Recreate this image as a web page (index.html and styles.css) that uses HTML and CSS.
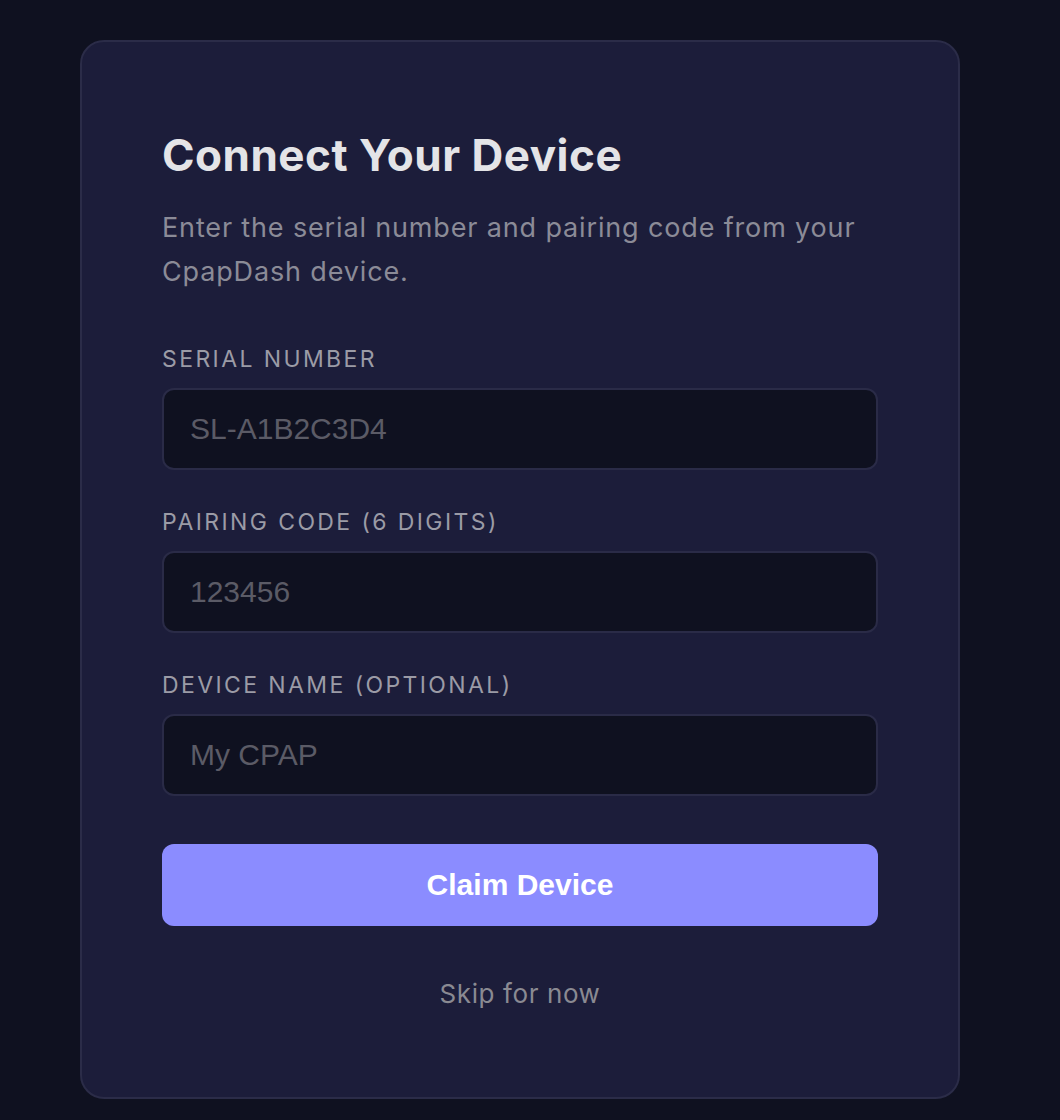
FILE: index.html
```html
<!DOCTYPE html>
<html lang="en">
<head>
<meta charset="utf-8">
<title>Connect Your Device</title>
<link rel="stylesheet" href="styles.css">
</head>
<body>
<main class="page">
  <section class="card">
    <h1 class="title">Connect Your Device</h1>
    <p class="subtitle">Enter the serial number and pairing code from your CpapDash device.</p>
    <form class="form">
      <label class="field">
        <span class="label">Serial Number</span>
        <input class="input" type="text" placeholder="SL-A1B2C3D4">
      </label>
      <label class="field">
        <span class="label">Pairing Code (6 digits)</span>
        <input class="input" type="text" placeholder="123456">
      </label>
      <label class="field">
        <span class="label">Device Name (optional)</span>
        <input class="input" type="text" placeholder="My CPAP">
      </label>
      <button class="primary" type="button">Claim Device</button>
      <button class="skip" type="button">Skip for now</button>
    </form>
  </section>
</main>
</body>
</html>
```

FILE: styles.css
```css
html, body {
  margin: 0;
  padding: 0;
  background: #0f1120;
}
body {
  font-family: Inter, "Noto Sans", sans-serif;
}
.page {
  padding: 40px 100px 20px 80px;
  min-height: 1040px;
}
.card {
  box-sizing: border-box;
  width: 880px;
  background: #1c1d3a;
  border: 2px solid #2b2c48;
  border-radius: 24px;
  padding: 80px 80px 82px;
}
.title {
  margin: 0;
  font-size: 44px;
  line-height: 66px;
  font-weight: 700;
  color: #e4e4e7;
  letter-spacing: 0.5px;
}
.subtitle {
  margin: 18px 0 0;
  font-size: 27px;
  line-height: 44px;
  letter-spacing: 0.85px;
  color: #8b8b97;
}
.form {
  display: flex;
  flex-direction: column;
  margin-top: 49px;
}
.field {
  display: flex;
  flex-direction: column;
  margin-bottom: 36px;
}
.label {
  font-size: 23px;
  line-height: 32px;
  text-transform: uppercase;
  letter-spacing: 2.4px;
  color: #9b9ba6;
  margin-bottom: 13px;
}
.input {
  box-sizing: border-box;
  height: 82px;
  width: 100%;
  background: #0f1120;
  border: 2px solid #2a2b47;
  border-radius: 12px;
  padding: 0 26px;
  font-family: "Liberation Sans", Arial, sans-serif;
  font-size: 30px;
  color: #e4e4e7;
  outline: none;
}
.input::placeholder {
  color: #5b5b66;
}
.field:last-of-type {
  margin-bottom: 48px;
}
.primary {
  height: 82px;
  border: none;
  border-radius: 12px;
  background: #8b8cff;
  color: #ffffff;
  font-family: "Liberation Sans", Arial, sans-serif;
  font-weight: 700;
  font-size: 30px;
  cursor: pointer;
}
.skip {
  margin-top: 47px;
  height: 42px;
  background: none;
  border: none;
  padding: 0;
  font-family: Inter, "Noto Sans", sans-serif;
  font-size: 26px;
  line-height: 42px;
  letter-spacing: 0.6px;
  color: #8a8a92;
  cursor: pointer;
}
```
